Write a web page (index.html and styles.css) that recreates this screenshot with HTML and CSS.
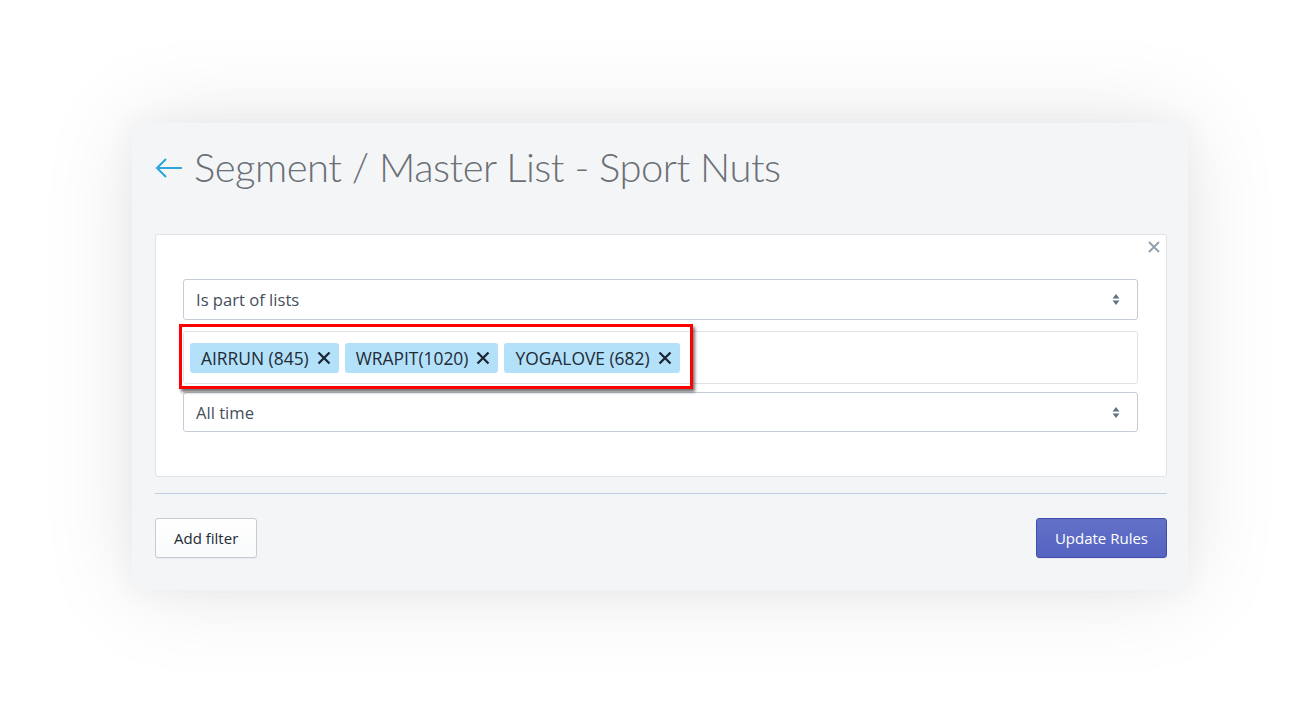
FILE: index.html
```html
<!DOCTYPE html>
<html>
<head>
<meta charset="utf-8">
<link rel="stylesheet" href="styles.css">
</head>
<body>
<div class="panel">
  <div class="title-row">
    <svg class="back" width="28" height="20" viewBox="0 0 28 20"><path d="M27 10H2M11 1L2 10l9 9" fill="none" stroke="#2fa4d9" stroke-width="2"/></svg>
    <h1 class="title">Segment / Master List - Sport Nuts</h1>
  </div>
  <div class="card">
    <svg class="close" width="12" height="12" viewBox="0 0 12 12"><path d="M1 1l10 10M11 1L1 11" stroke="#919eab" stroke-width="1.8"/></svg>
    <div class="select"><span>Is part of lists</span><svg class="chev" width="8" height="13" viewBox="0 0 8 13"><path d="M4 1L7.5 5.5H0.5z M4 12L0.5 7.5h7z" fill="#637381"/></svg></div>
    <div class="tags-wrap">
      <div class="tags">
        <span class="tag">AIRRUN (845)<svg class="x" width="14" height="14" viewBox="0 0 14 14"><path d="M1.5 1.5l11 11M12.5 1.5l-11 11" stroke="#1c2733" stroke-width="2.3"/></svg></span>
        <span class="tag">WRAPIT(1020)<svg class="x" width="14" height="14" viewBox="0 0 14 14"><path d="M1.5 1.5l11 11M12.5 1.5l-11 11" stroke="#1c2733" stroke-width="2.3"/></svg></span>
        <span class="tag">YOGALOVE (682)<svg class="x" width="14" height="14" viewBox="0 0 14 14"><path d="M1.5 1.5l11 11M12.5 1.5l-11 11" stroke="#1c2733" stroke-width="2.3"/></svg></span>
      </div>
      <div class="highlight"></div>
    </div>
    <div class="select last"><span>All time</span><svg class="chev" width="8" height="13" viewBox="0 0 8 13"><path d="M4 1L7.5 5.5H0.5z M4 12L0.5 7.5h7z" fill="#637381"/></svg></div>
  </div>
  <div class="divider"></div>
  <div class="actions">
    <button class="btn">Add filter</button>
    <button class="btn primary">Update Rules</button>
  </div>
</div>
</body>
</html>
```

FILE: styles.css
```css
html, body {
  margin: 0;
  padding: 0;
  background: #ffffff;
}
body {
  font-family: "Open Sans", "Noto Sans", sans-serif;
  height: 720px;
  overflow: hidden;
}
.panel {
  margin: 123px 0 0 132px;
  width: 1056px;
  height: 467px;
  box-sizing: border-box;
  background: #f4f5f7;
  padding: 0 21px 0 23px;
  box-shadow: 0 0 90px rgba(0, 0, 0, 0.10), 0 0 30px rgba(0, 0, 0, 0.04);
}
.title-row {
  display: flex;
  align-items: center;
  height: 111px;
  box-sizing: border-box;
  padding-bottom: 24px;
}
.back {
  margin-right: 11px;
  margin-top: 2px;
}
.title {
  margin: 0;
  font-family: "Lato", "Open Sans", sans-serif;
  font-weight: 300;
  font-size: 40px;
  letter-spacing: -0.5px;
  color: #6a7075;
}
.card {
  position: relative;
  background: #ffffff;
  border: 1px solid #dfe3e8;
  border-radius: 3px;
  height: 243px;
  box-sizing: border-box;
  padding: 44px 28px 0 27px;
}
.close {
  position: absolute;
  top: 6px;
  right: 6px;
}
.select {
  height: 41px;
  box-sizing: border-box;
  border: 1px solid #c4cdd5;
  border-radius: 3px;
  display: flex;
  align-items: center;
  justify-content: space-between;
  padding: 0 17px 0 12px;
  font-size: 16.6px;
  color: #454f5b;
}
.select.last {
  height: 40px;
}
.tags-wrap {
  position: relative;
  margin: 11px 0 8px;
}
.tags {
  height: 53px;
  box-sizing: border-box;
  border: 1px solid #dfe3e8;
  border-radius: 3px;
  display: flex;
  align-items: center;
  gap: 6px;
  padding: 0 6px;
}
.tag {
  display: inline-flex;
  align-items: center;
  height: 30px;
  background: #b4e1fa;
  border-radius: 3px;
  padding: 0 8px 0 11px;
  font-size: 17.4px;
  color: #212b36;
}
.x {
  margin-left: 8px;
}
.highlight {
  position: absolute;
  left: -4px;
  top: -7px;
  width: 514px;
  height: 65px;
  box-sizing: border-box;
  border: 3px solid #ff0000;
  box-shadow: 2px 3px 3px rgba(0, 0, 0, 0.55);
}
.divider {
  height: 1px;
  background: #bed0e0;
  margin-top: 16px;
}
.actions {
  display: flex;
  justify-content: space-between;
  margin-top: 24px;
}
.btn {
  height: 40px;
  box-sizing: border-box;
  border: 1px solid #c4cdd5;
  border-radius: 3px;
  background: linear-gradient(#ffffff, #f9fafb);
  font-family: "Open Sans", sans-serif;
  font-size: 15px;
  color: #212b36;
  padding: 0 18px;
  box-shadow: 0 1px 0 rgba(22, 29, 37, 0.05);
}
.btn.primary {
  background: linear-gradient(#6371c7, #5563c1);
  border-color: #3f4eae;
  color: #ffffff;
  padding: 0 18px;
}
```
